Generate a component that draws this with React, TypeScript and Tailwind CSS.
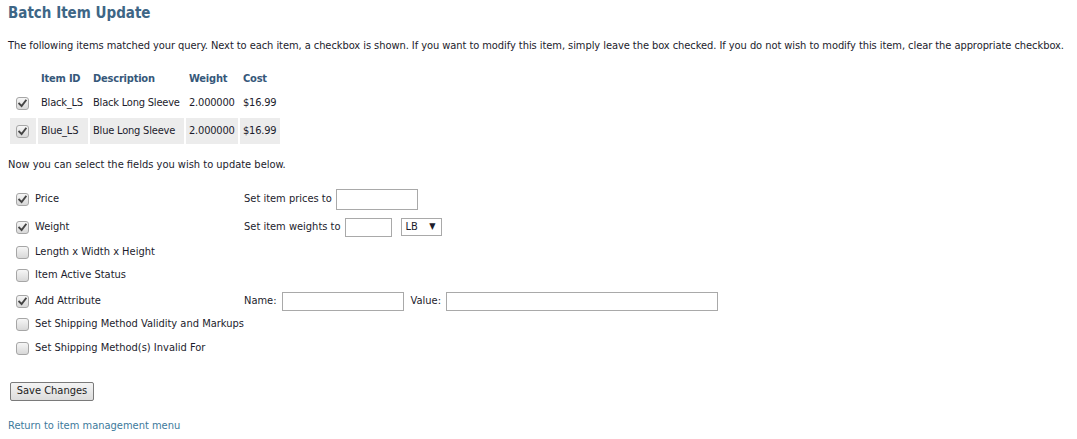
import React from "react";

type Item = { id: string; description: string; weight: string; cost: string };

const ITEMS: Item[] = [
    { id: "Black_LS", description: "Black Long Sleeve", weight: "2.000000", cost: "$16.99" },
    { id: "Blue_LS", description: "Blue Long Sleeve", weight: "2.000000", cost: "$16.99" },
];

// classic grey checkbox drawn by hand so it looks the same everywhere
const Check = ({ checked }: { checked: boolean }) => (
    <span className="inline-flex h-[13px] w-[13px] shrink-0 items-center justify-center rounded-[3px] border border-[#a6a6a6] bg-gradient-to-b from-[#f6f6f6] to-[#d8d8d8]">
        {checked && (
            <svg width="9" height="9" viewBox="0 0 9 9">
                <path d="M1.2 4.6 L3.6 7 L7.8 1.6" fill="none" stroke="#444" strokeWidth="1.9" strokeLinecap="square" />
            </svg>
        )}
    </span>
);

const TextBox = ({ className }: { className: string }) => (
    <span className={"inline-block border border-[#a9a9a9] bg-white " + className} />
);

type Field = { label: string; checked: boolean; height: string; extra?: React.ReactNode };

const FIELDS: Field[] = [
    {
        label: "Price",
        checked: true,
        height: "h-[26px]",
        extra: (
            <div className="flex items-center">
                <span>Set item prices to</span>
                <TextBox className="ml-[4px] h-[21px] w-[82px]" />
            </div>
        ),
    },
    {
        label: "Weight",
        checked: true,
        height: "h-[30px]",
        extra: (
            <div className="flex items-center">
                <span>Set item weights to</span>
                <TextBox className="ml-[4px] h-[19px] w-[47px]" />
                <span className="ml-[9px] flex h-[18px] w-[41px] items-center justify-between border border-[#a9a9a9] bg-white pl-[4px] pr-[5px]">
                    <span>LB</span>
                    <span className="text-[9px]">▼</span>
                </span>
            </div>
        ),
    },
    { label: "Length x Width x Height", checked: false, height: "h-[20px]" },
    { label: "Item Active Status", checked: false, height: "h-[26px]" },
    {
        label: "Add Attribute",
        checked: true,
        height: "h-[26px]",
        extra: (
            <div className="flex items-center">
                <span>Name:</span>
                <TextBox className="ml-[5px] h-[19px] w-[122px]" />
                <span className="ml-[7px]">Value:</span>
                <TextBox className="ml-[5px] h-[19px] w-[272px]" />
            </div>
        ),
    },
    { label: "Set Shipping Method Validity and Markups", checked: false, height: "h-[20px]" },
    { label: "Set Shipping Method(s) Invalid For", checked: false, height: "h-[28px]" },
];

export default function App() {
    return (
        <div className="min-h-screen bg-white px-2 pt-[4px] font-['DejaVu_Sans_Condensed','DejaVu_Sans',sans-serif] text-[11px] text-[#1c1c2c]">
            <h1 className="text-[15px] leading-[18px] font-bold text-[#3e6686]">Batch Item Update</h1>

            <p className="mt-[17px] leading-[14px] whitespace-nowrap tracking-[-0.06px]">
                The following items matched your query. Next to each item, a checkbox is shown. If you want to modify this item, simply leave the box checked. If you do not wish to modify this item, clear the appropriate checkbox.
            </p>

            <table className="mt-[15px] table-fixed border-separate border-spacing-[2px] tracking-[-0.2px]">
                <thead>
                    <tr className="h-[18px] text-left font-bold text-[#36587a]">
                        <th className="w-[26px]" />
                        <th className="w-[50px] px-[3px] font-bold">Item ID</th>
                        <th className="w-[94px] px-[3px] font-bold">Description</th>
                        <th className="w-[52px] px-[3px] font-bold">Weight</th>
                        <th className="w-[40px] px-[3px] font-bold">Cost</th>
                    </tr>
                </thead>
                <tbody>
                    {ITEMS.map((item, i) => {
                        const cell = i % 2 === 1 ? "bg-[#ececec]" : "";
                        return (
                            <tr key={item.id} className="h-[26px]">
                                <td className={cell + " pl-[6px]"}>
                                    <span className="flex">
                                        <Check checked />
                                    </span>
                                </td>
                                <td className={cell + " px-[3px]"}>{item.id}</td>
                                <td className={cell + " px-[3px] whitespace-nowrap"}>{item.description}</td>
                                <td className={cell + " px-[3px]"}>{item.weight}</td>
                                <td className={cell + " px-[3px]"}>{item.cost}</td>
                            </tr>
                        );
                    })}
                </tbody>
            </table>

            <p className="mt-[12px] leading-[14px]">Now you can select the fields you wish to update below.</p>

            <div className="mt-[14px] flex flex-col">
                {FIELDS.map((f) => (
                    <div key={f.label} className={"flex items-center " + f.height}>
                        <div className="flex w-[236px] shrink-0 items-center pl-[8px]">
                            <Check checked={f.checked} />
                            <span className="ml-[6px] whitespace-nowrap">{f.label}</span>
                        </div>
                        {f.extra}
                    </div>
                ))}
            </div>

            <button className="mt-[20px] ml-[2px] flex h-[19px] w-[84px] items-center justify-center rounded-[2px] border border-[#7a7a7a] bg-gradient-to-b from-[#f4f4f4] to-[#dcdcdc] text-[11px] text-[#1c1c1c]">
                Save Changes
            </button>

            <a href="#" className="mt-[18px] block leading-[14px] text-[#3d7a9c]">
                Return to item management menu
            </a>
        </div>
    );
}
